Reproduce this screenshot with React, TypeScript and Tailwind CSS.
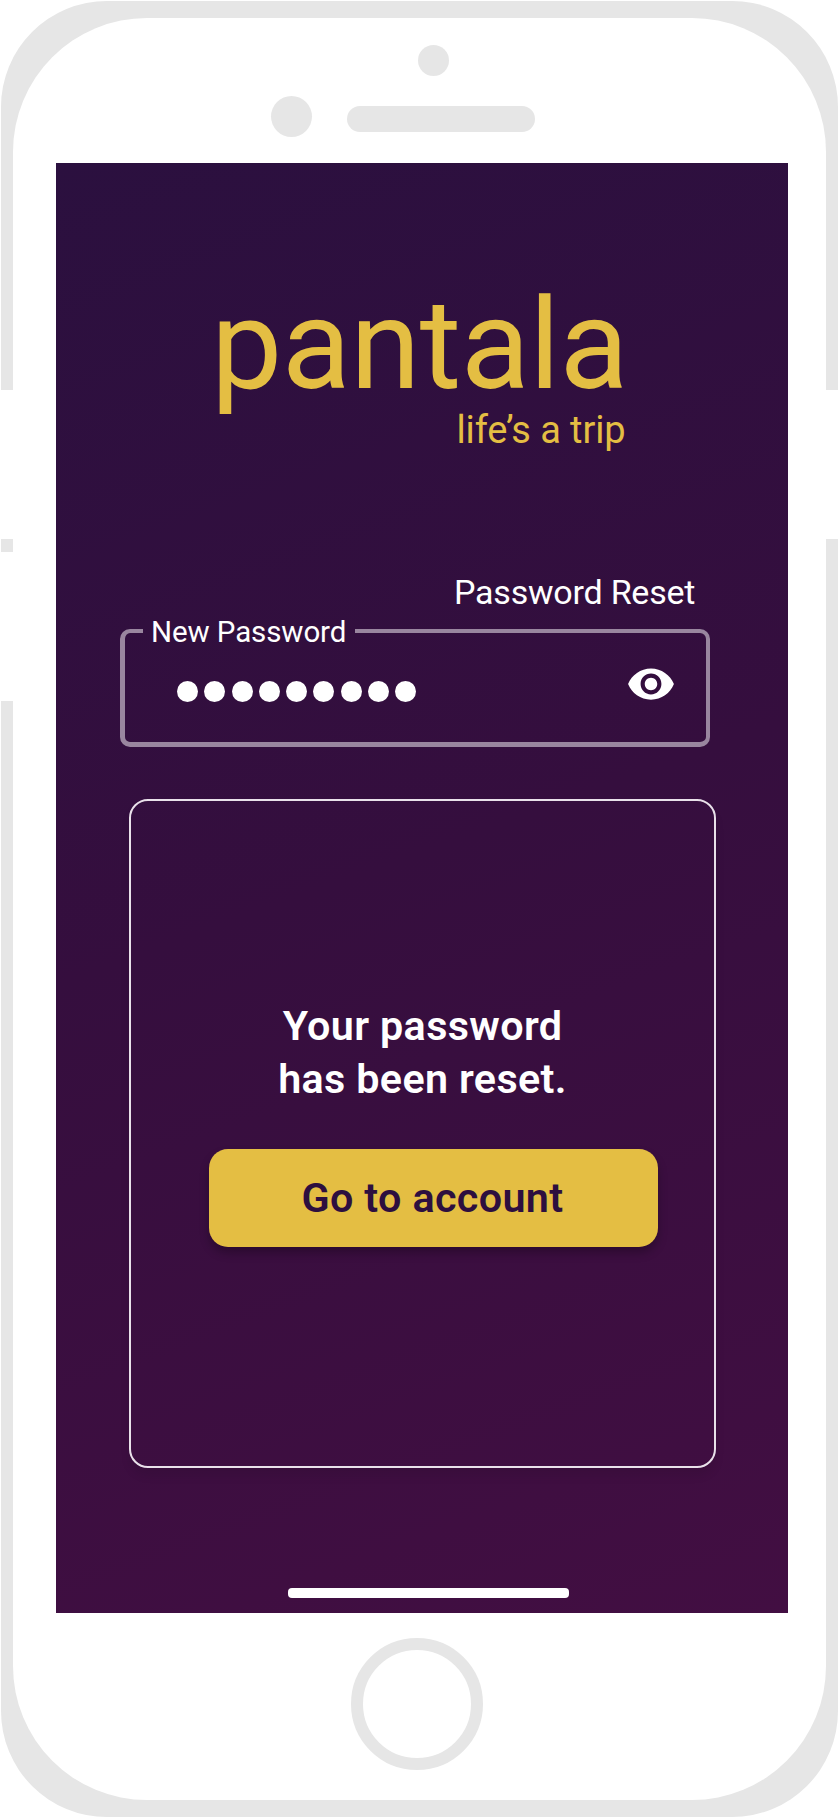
import { MdVisibility } from "react-icons/md";

const passwordLength = 9;

function TopHardware() {
  return (
    <div className="flex h-[145px] w-full shrink-0 flex-col items-start">
      <div className="mt-[27px] ml-[405px] size-[31px] rounded-full bg-[#e6e6e6]" />
      <div className="mt-5 ml-[258px] flex items-center gap-[35px]">
        <div className="size-[41px] rounded-full bg-[#e6e6e6]" />
        <div className="mt-[5px] h-[26px] w-[188px] rounded-full bg-[#e6e6e6]" />
      </div>
    </div>
  );
}

function Brand() {
  return (
    <header className="flex flex-col items-start pt-[117px] whitespace-nowrap text-[#e4be43]">
      <h1 className="ml-[155px] h-[130px] text-[127px] leading-[130px] font-normal tracking-[-0.6px]">
        pantala
      </h1>
      <p className="ml-[400.4px] h-10 text-[38px] leading-10 tracking-[-0.1px]">life’s a trip</p>
    </header>
  );
}

function PasswordField() {
  return (
    <section className="mt-[123px]">
      <h2 className="ml-[398px] h-[38px] text-[34px] leading-[39px] font-normal tracking-[-0.22px] whitespace-nowrap">
        Password Reset
      </h2>
      <fieldset className="ml-[64px] flex h-[136px] w-[590px] rounded-[10px] border-4 border-b-5 border-l-5 border-[#99869f]">
        <legend className="ml-[18px] h-10 w-[212px] pl-2 text-[29.5px] leading-[42px] tracking-[-0.1px] whitespace-nowrap">
          New Password
        </legend>
        <div className="flex h-[94px] w-full items-start justify-between pr-[30px] pl-[52px]">
          <div className="mt-[30px] flex gap-[6.25px]">
            {Array.from({ length: passwordLength }, (_, i) => (
              <span key={i} className="size-[21px] rounded-full bg-white" />
            ))}
          </div>
          <button aria-label="Show password" className="mt-2">
            <MdVisibility className="size-[50px]" />
          </button>
        </div>
      </fieldset>
    </section>
  );
}

function Confirmation() {
  return (
    <section className="mt-[52px] ml-[73px] flex h-[669px] w-[587px] flex-col items-start rounded-[19px] border-2 border-[#e9e1ea] pt-[199px] shadow-[0_8px_10px_rgba(0,0,0,0.08)]">
      <p className="w-full text-center text-[41.3px] leading-[53px] font-semibold tracking-[0.35px]">
        Your password
        <br />
        has been reset.
      </p>
      <button className="mt-[43px] ml-[78px] h-[98px] w-[449px] rounded-[19px] bg-[#e4be43] pr-0.5 text-[41.3px] leading-[98px] font-semibold tracking-[0.35px] text-[#2d0f3f] shadow-[0_6px_10px_rgba(0,0,0,0.25)]">
        Go to account
      </button>
    </section>
  );
}

export default function App() {
  return (
    <div className="relative h-[1818px] w-[838px] overflow-hidden bg-white pt-px pl-[0.5px] font-['Roboto',sans-serif] text-white">
      <div className="h-[1816px] w-[837.5px] rounded-[106px] bg-[#e6e6e6] pt-[17px] pl-[12.5px]">
        <div className="flex h-[1782px] w-[813px] flex-col rounded-[134px] bg-white">
          <TopHardware />
          <main className="ml-[43px] flex h-[1450px] w-[732px] shrink-0 flex-col bg-[linear-gradient(160deg,#2b103f_0%,#350e3e_48%,#420e42_100%)]">
            <Brand />
            <PasswordField />
            <Confirmation />
            <div className="mt-[120px] ml-[232px] h-2.5 w-[281px] rounded-[4px] bg-white" />
          </main>
          <div className="mt-[25px] ml-[338px] size-[132px] shrink-0 rounded-full border-[12.8px] border-[#e6e6e6]" />
        </div>
      </div>
      <div className="absolute top-[390px] left-px h-[149px] w-3 bg-white" />
      <div className="absolute top-[552px] left-px h-[149px] w-3 bg-white" />
      <div className="absolute top-[390px] right-0 h-[149px] w-3 bg-white" />
    </div>
  );
}
